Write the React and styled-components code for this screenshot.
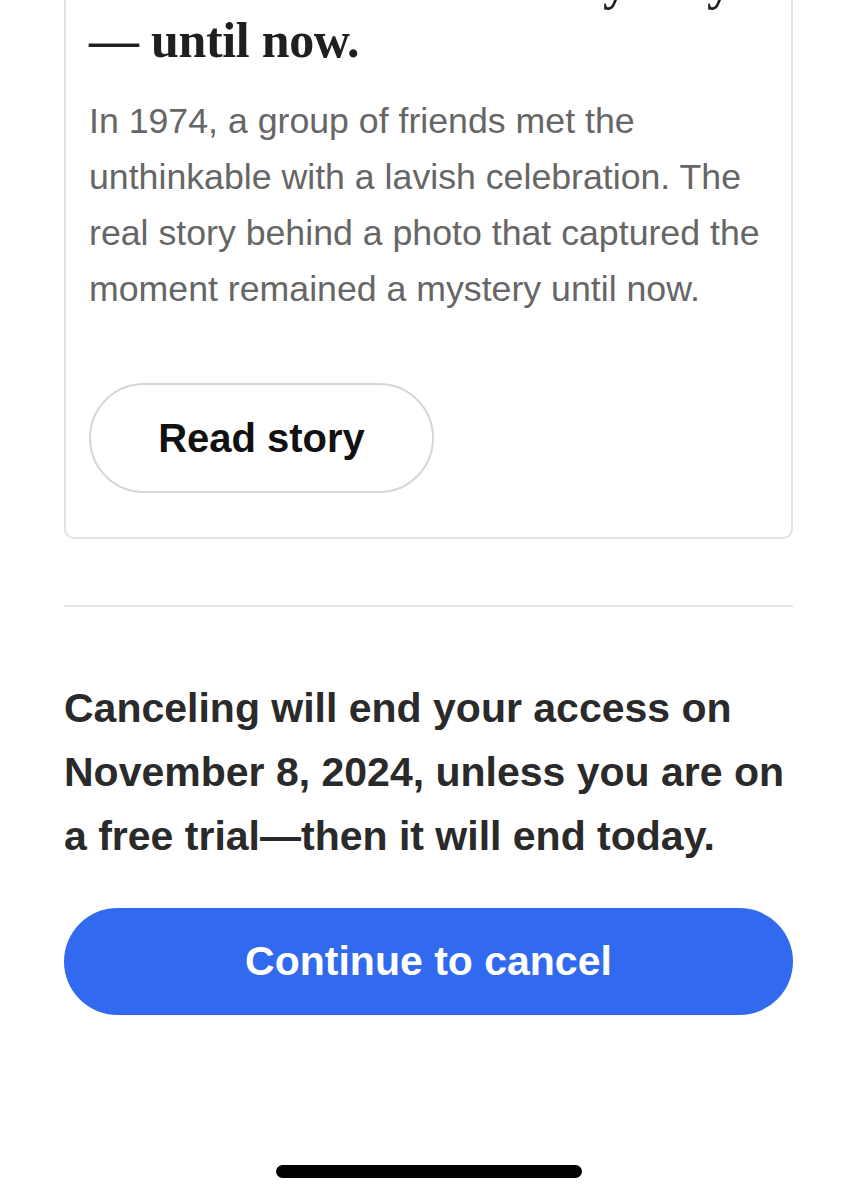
import styled, { createGlobalStyle } from "styled-components";

const GlobalStyle = createGlobalStyle`
  html, body {
    margin: 0;
    padding: 0;
    background: #fff;
  }
  body {
    font-family: "Liberation Sans", Arial, sans-serif;
    -webkit-font-smoothing: antialiased;
  }
`;

const Screen = styled.div`
  width: 858px;
  height: 1200px;
  overflow: hidden;
  position: relative;
  background: #fff;
`;

/* content is scrolled so the top of the story card sits above the fold */
const Scroller = styled.div`
  margin-top: -73px;
  padding: 0 65px 0 64px;
`;

const StoryCard = styled.article`
  border: 2px solid #e2e2e2;
  border-radius: 10px;
  padding: 24px 23px 44px;
`;

const Headline = styled.h2`
  margin: 0;
  font-family: "Liberation Serif", "Times New Roman", serif;
  font-weight: 700;
  font-size: 50px;
  line-height: 58px;
  letter-spacing: -0.3px;
  color: #1f1f1f;
`;

const Dek = styled.p`
  margin: 24px 0 0;
  font-size: 35.7px;
  line-height: 56px;
  color: #666;
`;

const OutlineButton = styled.button`
  display: flex;
  align-items: center;
  justify-content: center;
  margin-top: 66px;
  width: 345px;
  height: 110px;
  border: 2px solid #d6d6d6;
  border-radius: 55px;
  background: #fff;
  font-family: "Liberation Sans", Arial, sans-serif;
  font-weight: 700;
  font-size: 40px;
  color: #111;
  cursor: pointer;
`;

const Divider = styled.hr`
  margin: 66px 0 0;
  border: 0;
  height: 2px;
  background: #e6e6e6;
`;

const Notice = styled.p`
  margin: 69px 0 0;
  font-weight: 700;
  font-size: 41px;
  line-height: 64px;
  color: #2a2a2a;
`;

const PrimaryButton = styled.button`
  display: flex;
  align-items: center;
  justify-content: center;
  margin-top: 40px;
  width: 100%;
  height: 107px;
  border: 0;
  border-radius: 54px;
  background: #3169ef;
  font-family: "Liberation Sans", Arial, sans-serif;
  font-weight: 700;
  font-size: 41px;
  color: #fff;
  cursor: pointer;
`;

const HomeIndicator = styled.div`
  position: absolute;
  left: 50%;
  bottom: 22px;
  transform: translateX(-50%);
  width: 306px;
  height: 13px;
  border-radius: 7px;
  background: #000;
`;

export default function App() {
  return (
    <>
      <GlobalStyle />
      <Screen>
        <Scroller>
          <StoryCard>
            <Headline>The last hurrah was a mystery — until now.</Headline>
            <Dek>
              In 1974, a group of friends met the unthinkable with a lavish
              celebration. The real story behind a photo that captured the
              moment remained a mystery until now.
            </Dek>
            <OutlineButton>Read story</OutlineButton>
          </StoryCard>
          <Divider />
          <Notice>
            Canceling will end your access on November 8, 2024, unless you are
            on a free trial—then it will end today.
          </Notice>
          <PrimaryButton>Continue to cancel</PrimaryButton>
        </Scroller>
        <HomeIndicator />
      </Screen>
    </>
  );
}
